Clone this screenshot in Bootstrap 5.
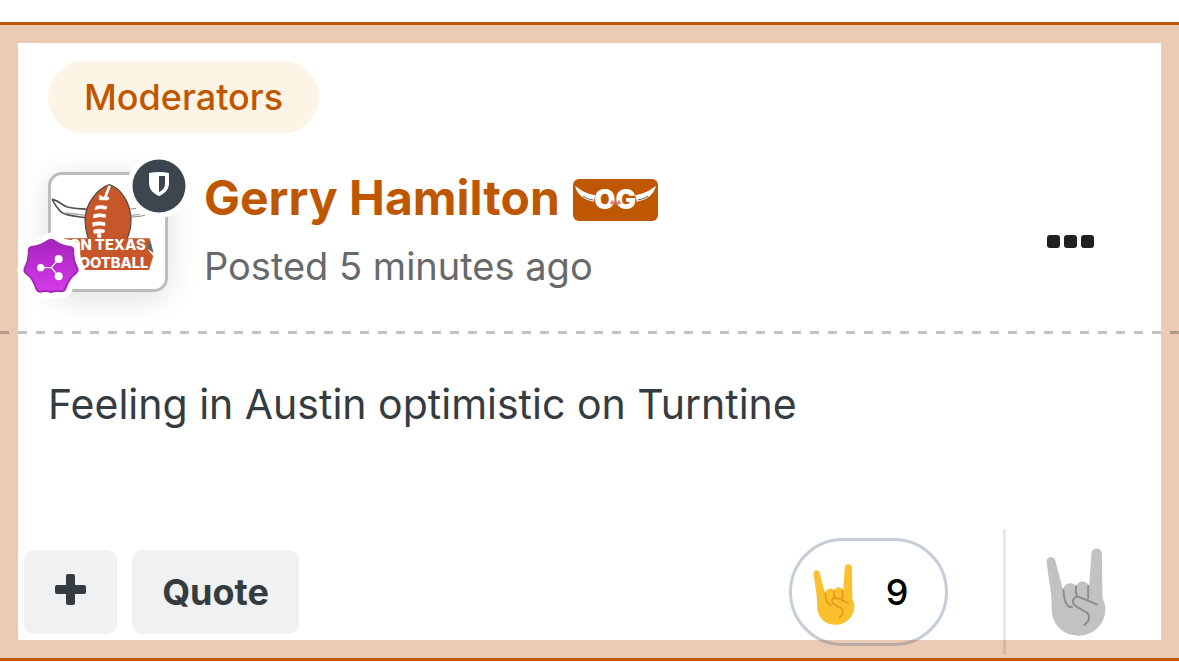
<!DOCTYPE html>
<html lang="en">
<head>
<meta charset="utf-8">
<meta name="viewport" content="width=device-width, initial-scale=1">
<title>Forum post</title>
<link href="https://cdn.jsdelivr.net/npm/bootstrap@5.3.0/dist/css/bootstrap.min.css" rel="stylesheet">
<script src="https://cdn.jsdelivr.net/npm/bootstrap@5.3.0/dist/js/bootstrap.bundle.min.js" defer></script>
<style>
:root { --burnt: #bf5700; --slate: #353c41; }
body { font-family: Inter, "Liberation Sans", sans-serif; background: #fff; color: var(--slate); }
a { color: inherit; text-decoration: none; }
.post { margin-top: 22px; border-top: 3px solid var(--burnt); border-bottom: 3px solid var(--burnt); box-shadow: inset 0 0 0 18px #ebcbb3; }
.post-head { padding: 36px 48px 31px; }
.group-pill { background: #fef4e6; color: var(--burnt); font-size: 36px; font-weight: 500; line-height: 72px; padding: 0 36px; }
.author-row { margin-top: 31px; gap: 36px; }
.avatar { width: 120px; height: 120px; border: 3px solid #bcbcbc; border-radius: 14px; background: #fff; box-shadow: 0 6px 30px rgba(0,0,0,.13); }
.avatar-art { width: 114px; height: 114px; }
.mod-badge { top: -21px; right: -26px; width: 64px; height: 64px; }
.share-badge { left: -35px; bottom: -12px; width: 70px; height: 70px; }
.author { color: var(--burnt); font-size: 48px; font-weight: 700; line-height: 68px; gap: 13px; }
.og-mark { margin-top: 4px; }
.posted { color: #68696b; font-size: 38px; line-height: 68px; }
.dots { padding-top: 18px; margin-right: 36px; }
.dash-line { height: 3px; background: repeating-linear-gradient(90deg, rgba(0,0,0,.24) 0 9px, transparent 9px 18px); }
.post-body { padding: 38px 48px 93px; font-size: 41px; line-height: 64px; }
.post-foot { padding: 0 33px 4px 24px; }
.act { height: 84px; border: 0; border-radius: 10px; background: #f0f1f3; color: var(--slate); font-size: 36px; font-weight: 700; }
.act-plus { width: 93px; }
.act-quote { width: 167px; }
.act-group { gap: 15px; }
.count-pill { width: 159px; height: 108px; border: 3px solid rgba(85,107,145,.34); border-radius: 54px; background: transparent; color: #000; font-size: 36px; font-weight: 500; margin-right: 55px; padding: 0 16px 0 0; gap: 31px; }
.pill-hand { margin-top: 6px; }
.react { width: 143px; height: 125px; border: 0; border-left: 3px solid rgba(0,0,0,.09); background: transparent; }
</style>
</head>
<body>
<svg width="0" height="0" class="position-absolute" aria-hidden="true">
  <symbol id="horns" viewBox="50 40 179 264">
    <path fill="currentColor" d="M51 83C49 64 75 61 78 80L100 164C104 150 120 142 132 148Q138 151 140 154C143 143 159 136 171 144Q177 148 179 153L186 56C187 36 216 37 217 56L219 190C225 203 228 214 228 226C226 270 190 303 147 303C103 303 70 273 67 230L65 180Z"/>
    <path fill="none" stroke="var(--crease)" stroke-width="6" stroke-linecap="round" stroke-linejoin="round" d="M102 167C103 190 109 220 127 217M140 155Q137 171 142 184M176 154V191M202 209L149 187C137 184 128 193 131 205C135 219 160 223 171 233C184 244 180 260 164 271"/>
  </symbol>
</svg>
<article class="post">
  <header class="post-head">
    <a href="#" class="group-pill rounded-pill d-inline-block align-top">Moderators</a>
    <div class="author-row d-flex align-items-center">
      <div class="avatar position-relative flex-shrink-0">
        <svg class="avatar-art d-block" viewBox="33 15 342 342" role="img" aria-label="On Texas Football">
          <g stroke="#55504c" stroke-width="5" fill="#fff" stroke-linejoin="round">
            <path d="M140 118C118 116 96 115 82 111C67 106 61 95 38 88C36 95 50 111 61 124C75 138 110 139 142 144Z"/>
            <path d="M265 118L290 115L330 112L320 133C306 140 288 140 267 142Z" stroke="#8b8784" stroke-width="3"/>
          </g>
          <path d="M75 129Q106 132 137 136M270 136L300 133" stroke="#aaa" stroke-width="4" fill="none"/>
          <path d="M208 44C170 57 137 102 135 147Q135 178 145 208L260 208Q273 182 273 146C270 98 246 57 208 44Z" fill="#c7562a" stroke="#58504c" stroke-width="4"/>
          <path d="M209 47L196 81" stroke="#fff" stroke-width="8"/>
          <path d="M179 76L188 81L205 81L207 86L203 90L178 89ZM168 109Q182 104 201 110L198 118Q180 112 165 119ZM161 134Q177 128 197 134L196 142Q179 137 161 144ZM158 158Q176 153 195 158V167Q177 162 159 169ZM161 180Q176 175 194 180L192 188L182 187L183 203H173V189L162 190Z" fill="#fff" stroke="#fff" stroke-width="2"/>
          <path d="M52 205H329L324 239L340 258L327 300H52Z" fill="#c7562a"/>
          <path d="M329 205L341 249L322 236Z" fill="#666"/>
          <g fill="#fff" font-family="Inter" font-weight="800" font-size="44"><text x="317" y="241" text-anchor="end">ON TEXAS</text><text x="325" y="293" text-anchor="end">FOOTBALL</text></g>
        </svg>
        <svg class="mod-badge position-absolute" viewBox="0 0 64 64" aria-hidden="true">
          <circle cx="32" cy="32" r="32" fill="#fff"/><circle cx="32" cy="32" r="26.500" fill="#3d464f"/>
          <path d="M22 19Q32 17 42 19V29C42 36 37 40 32 42C27 40 22 36 22 29Z" fill="#fff"/>
          <path d="M32 22H38V29C38 34 36 36 32 38Z" fill="#3d464f"/>
        </svg>
        <svg class="share-badge position-absolute" viewBox="48 240 210 210" aria-hidden="true">
          <defs><linearGradient id="purple" x2="0" y2="1"><stop stop-color="#a523bb"/><stop offset="1" stop-color="#d63aeb"/></linearGradient></defs>
          <path d="M145 269Q153 263 161 269Q184 285 211 288Q220 290 220 299Q218 326 231 350Q236 358 229 365Q206 382 196 413Q193 421 184 421Q167 418 153 423Q137 418 121 422Q112 422 109 413Q100 382 77 366Q71 360 75 350Q88 326 86 299Q86 290 95 288Q122 285 145 269Z" fill="none" stroke="#fff" stroke-width="42" stroke-linejoin="round"/>
          <path d="M145 269Q153 263 161 269Q184 285 211 288Q220 290 220 299Q218 326 231 350Q236 358 229 365Q206 382 196 413Q193 421 184 421Q167 418 153 423Q137 418 121 422Q112 422 109 413Q100 382 77 366Q71 360 75 350Q88 326 86 299Q86 290 95 288Q122 285 145 269Z" fill="url(#purple)" stroke="#a428b8" stroke-width="6"/>
          <path d="M122 350H154L176 324M154 350L176 376" fill="none" stroke="#fff" stroke-width="4"/>
          <g fill="#fff"><circle cx="122" cy="350" r="11"/><circle cx="176" cy="324" r="12"/><circle cx="176" cy="376" r="12"/></g>
        </svg>
      </div>
      <div class="flex-grow-1">
        <div class="author d-flex align-items-center">
          <a href="#">Gerry Hamilton</a>
          <svg class="og-mark" width="85" height="42" viewBox="34 28 256 126" role="img" aria-label="OG">
            <rect x="34" y="28" width="256" height="126" rx="18" fill="#bf5700"/>
            <g fill="#fff"><path d="M40 49C59 62 73 72 101 77L96 96C67 91 48 76 40 49Z"/><path d="M284 49C265 62 249 72 221 77L226 96C257 91 276 76 284 49Z"/></g>
            <path d="M64 79Q79 90 95 91M260 79Q245 90 228 91" fill="none" stroke="#667" stroke-width="3"/>
            <text x="161" y="119" text-anchor="middle" font-family="Inter" font-weight="900" font-size="82" fill="#fff">OG</text>
            <path d="M146 100H178M152 92V104M162 82V104M172 92V104" fill="none" stroke="#cf7068" stroke-width="4"/>
          </svg>
        </div>
        <div class="posted">Posted 5 minutes ago</div>
      </div>
      <button type="button" class="dots btn border-0 px-0 pb-0" aria-label="More options">
        <svg class="d-block" width="48" height="13" viewBox="0 0 48 13" fill="#202020"><rect width="13" height="13" rx="3"/><rect x="17" width="13" height="13" rx="3"/><rect x="34" width="13" height="13" rx="3"/></svg>
      </button>
    </div>
  </header>
  <div class="dash-line"></div>
  <div class="post-body">Feeling in Austin optimistic on Turntine</div>
  <footer class="post-foot d-flex align-items-center justify-content-between">
    <div class="act-group d-flex">
      <button type="button" class="act act-plus d-flex align-items-center justify-content-center p-0 pb-1" aria-label="Multi-quote">
        <svg width="31" height="31" viewBox="0 0 31 31" fill="currentColor"><rect x="11" width="9" height="31" rx="2"/><rect y="11" width="31" height="9" rx="2"/></svg>
      </button>
      <button type="button" class="act act-quote p-0">Quote</button>
    </div>
    <div class="d-flex align-items-center">
      <button type="button" class="count-pill d-flex align-items-center justify-content-center">
        <svg class="pill-hand" width="42" height="61" color="#fbc02d" style="--crease:#e38f16" aria-hidden="true"><use href="#horns"/></svg>
        <span>9</span>
      </button>
      <button type="button" class="react d-flex align-items-center justify-content-center p-0" aria-label="React">
        <svg width="60" height="88" color="#c2c2c2" style="--crease:#8d8d8d" aria-hidden="true"><use href="#horns"/></svg>
      </button>
    </div>
  </footer>
</article>
</body>
</html>
